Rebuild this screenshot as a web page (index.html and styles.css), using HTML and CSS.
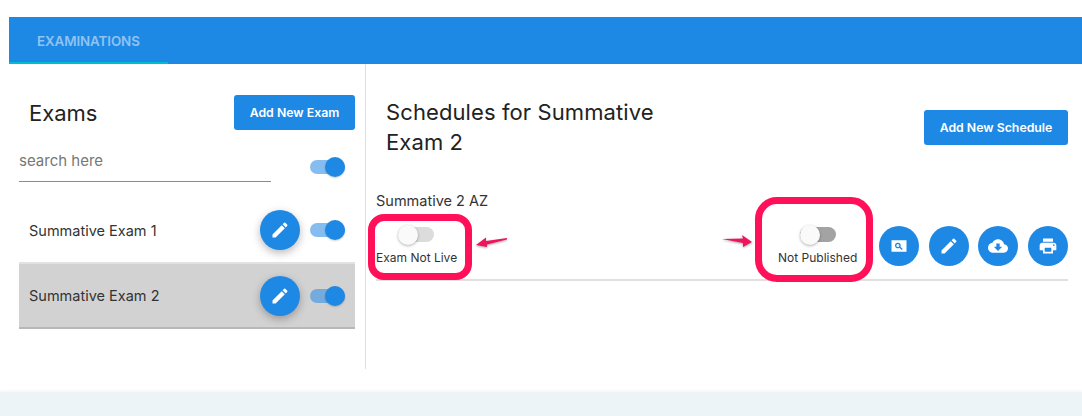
FILE: index.html
```html
<!DOCTYPE html>
<html lang="en">
<head>
<meta charset="utf-8">
<title>Examinations</title>
<link rel="stylesheet" href="styles.css">
</head>
<body>
<div class="card">
  <nav class="tabs"><div class="tab">EXAMINATIONS</div></nav>
  <div class="panels">
    <aside class="side">
      <div class="side-head">
        <h2 class="side-title">Exams</h2>
        <button class="btn btn-exam">Add New Exam</button>
      </div>
      <div class="search-row">
        <div class="search">search here</div>
        <span class="sw sw-on"><i class="knob"></i></span>
      </div>
      <div class="exam">
        <span class="exam-name">Summative Exam 1</span>
        <span class="fab fab-shadow"><svg viewBox="0 0 24 24"><path d="M3 17.25V21h3.75L17.81 9.94l-3.75-3.75L3 17.25zM20.71 7.04a1 1 0 0 0 0-1.41l-2.34-2.34a1 1 0 0 0-1.41 0l-1.83 1.83 3.75 3.75 1.83-1.83z"/></svg></span>
        <span class="sw sw-on"><i class="knob"></i></span>
      </div>
      <div class="exam exam-active">
        <span class="exam-name">Summative Exam 2</span>
        <span class="fab fab-shadow"><svg viewBox="0 0 24 24"><path d="M3 17.25V21h3.75L17.81 9.94l-3.75-3.75L3 17.25zM20.71 7.04a1 1 0 0 0 0-1.41l-2.34-2.34a1 1 0 0 0-1.41 0l-1.83 1.83 3.75 3.75 1.83-1.83z"/></svg></span>
        <span class="sw sw-on"><i class="knob"></i></span>
      </div>
    </aside>
    <main class="content">
      <div class="content-head">
        <h2 class="content-title">Schedules for Summative Exam 2</h2>
        <button class="btn btn-schedule">Add New Schedule</button>
      </div>
      <div class="schedule">
        <div class="schedule-name">Summative 2 AZ</div>
        <div class="schedule-row">
          <div class="status status-live">
            <span class="sw sw-off"><i class="knob knob-off"></i></span>
            <span class="status-label">Exam Not Live</span>
          </div>
          <div class="status status-pub">
            <span class="sw sw-off sw-dark"><i class="knob knob-off"></i></span>
            <span class="status-label">Not Published</span>
          </div>
          <div class="actions">
            <span class="fab"><svg viewBox="0 0 24 24"><path fill-rule="evenodd" d="M3 5h18v14H3zM10.6 8a3.4 3.4 0 1 0 1.9 6.2l2.7 2.7 1.2-1.2-2.7-2.7A3.4 3.4 0 0 0 10.600 8zm0 1.600a1.800 1.800 0 1 1 0 3.600 1.800 1.800 0 0 1 0-3.600z"/></svg></span>
            <span class="fab"><svg viewBox="0 0 24 24"><path d="M3 17.25V21h3.75L17.81 9.94l-3.75-3.75L3 17.25zM20.71 7.04a1 1 0 0 0 0-1.41l-2.34-2.34a1 1 0 0 0-1.41 0l-1.83 1.83 3.75 3.75 1.83-1.83z"/></svg></span>
            <span class="fab"><svg viewBox="0 0 24 24"><path d="M19.35 10.04C18.67 6.59 15.64 4 12 4 9.11 4 6.6 5.64 5.35 8.04 2.34 8.36 0 10.91 0 14c0 3.31 2.69 6 6 6h13c2.76 0 5-2.24 5-5 0-2.64-2.05-4.78-4.65-4.96zM17 13l-5 5-5-5h3V9h4v4h3z"/></svg></span>
            <span class="fab"><svg viewBox="0 0 24 24"><path d="M19 8H5c-1.66 0-3 1.34-3 3v6h4v4h12v-4h4v-6c0-1.66-1.34-3-3-3zm-3 11H8v-5h8v5zm3-7c-.55 0-1-.45-1-1s.45-1 1-1 1 .45 1 1-.45 1-1 1zm-1-9H6v4h12V3z"/></svg></span>
          </div>
        </div>
      </div>
    </main>
  </div>
  <div class="mark mark-live"></div>
  <div class="mark mark-pub"></div>
  <svg class="arrow arrow-live" viewBox="0 0 33 12"><path d="M1 9 L11 1.500 L11 5 L32 2 L32 3.500 L12 8.500 L12 11 Z"/></svg>
  <svg class="arrow arrow-pub" viewBox="0 0 31 14"><path d="M0 5 L21 4.500 L20 1 L30 8 L21 13 L21 9 Z"/></svg>
</div>
<footer class="foot"></footer>
</body>
</html>
```

FILE: styles.css
```css
* { box-sizing: border-box; }
html, body { margin: 0; height: 416px; overflow: hidden; }
body {
  background: #fff;
  font-family: "Inter", "Liberation Sans", sans-serif;
  color: #222;
  display: flex;
  flex-direction: column;
}
.card { position: relative; height: 392px; padding: 17px 0 0 9px; }
.tabs { height: 47px; background: #1e88e5; }
.tab {
  width: 159px;
  height: 47px;
  border-bottom: 2px solid #00bcd4;
  padding: 16px 0 0 28px;
  font-size: 13.4px;
  font-weight: 600;
  line-height: 16px;
  color: #8fc3f2;
  letter-spacing: -.1px;
}
.panels { display: flex; height: 305px; }
.side { flex: none; width: 357px; padding: 31px 10px 0 10px; border-right: 1px solid #e0e0e0; }
.side-head { display: flex; justify-content: space-between; align-items: center; height: 35px; padding-left: 10px; }
.side-title { margin: 0; font-size: 22px; font-weight: 400; color: #222; }
.btn {
  border: 0;
  border-radius: 3px;
  background: #1e88e5;
  color: #fff;
  font-family: inherit;
  font-size: 12.3px;
  font-weight: 600;
  height: 35px;
  padding: 0;
}
.btn-exam { width: 121px; }
.btn-schedule { width: 144px; margin-top: 15px; }
.search-row { display: flex; justify-content: space-between; align-items: flex-start; height: 68px; padding-right: 10px; padding-top: 14px; }
.search {
  width: 252px;
  height: 38px;
  padding-top: 8px;
  border-bottom: 1px solid #8c8c8c;
  font-size: 15px;
  line-height: 17px;
  color: #777;
}
.search-row .sw { margin-top: 16px; }
.sw { position: relative; display: block; width: 35px; height: 14px; border-radius: 8px; flex: none; }
.sw-on { background: #86bdf1; }
.exam-active .sw-on { background: #75abdc; }
.sw-off { background: #dcdcdc; width: 36px; height: 15px; }
.sw-dark { background: #a3a3a3; }
.knob { position: absolute; top: -3px; right: 0; width: 20px; height: 20px; border-radius: 50%; background: #1e88e5; box-shadow: 0 1px 2px rgba(0,0,0,.2); }
.knob-off { left: 0; right: auto; top: -2px; width: 20px; height: 20px; background: #fafafa; box-shadow: 0 1px 3px rgba(0,0,0,.3); }
.exam { display: flex; align-items: center; height: 64px; padding: 0 10px; }
.exam-active { height: 67px; background: #d2d2d2; border-top: 2px solid #e2e2e2; border-bottom: 2px solid #b8b8b8; }
.exam-name { flex: 1; font-size: 14.5px; color: #333; }
.fab {
  display: flex;
  align-items: center;
  justify-content: center;
  width: 40px;
  height: 40px;
  border-radius: 50%;
  background: #1e88e5;
  flex: none;
}
.fab svg { width: 20px; height: 20px; fill: #fff; }
.fab-shadow { box-shadow: 0 3px 8px rgba(0,0,0,.28); margin-right: 10px; }
.content { flex: 1; min-width: 0; padding: 31px 14px 0 10px; }
.content-head { display: flex; justify-content: space-between; align-items: flex-start; padding-left: 10px; height: 97px; }
.content-title { margin: 0; width: 290px; font-size: 22px; line-height: 29.5px; font-weight: 400; padding-top: 3px; color: #222; letter-spacing: .1px; }
.schedule { height: 89px; border-bottom: 2px solid #e0e0e0; }
.schedule-name { font-size: 14.5px; line-height: 17px; color: #333; }
.schedule-row { display: flex; align-items: flex-start; }
.status { display: flex; flex-direction: column; }
.status-live { width: 402px; padding-top: 18px; }
.status-live .sw { margin-left: 22px; }
.status-pub { width: 101px; padding-top: 18px; }
.status-pub .sw { margin-left: 22px; }
.status-label { margin-top: 8px; font-size: 12px; line-height: 15px; color: #333; white-space: nowrap; }
.actions { display: flex; gap: 9.67px; margin-top: 17px; }
.mark { position: absolute; border: 7px solid #ff1059; border-radius: 16px; }
.mark-live { left: 368px; top: 214px; width: 104px; height: 66px; }
.mark-pub { left: 755px; top: 197px; width: 118px; height: 85px; border-radius: 22px; }
.arrow { position: absolute; fill: #f0145f; filter: drop-shadow(0 1px 1px rgba(0,0,0,.35)); }
.arrow-live { left: 475px; top: 236px; width: 33px; height: 12px; }
.arrow-pub { left: 722px; top: 234px; width: 31px; height: 14px; }
.foot { height: 24px; background: #edf4f7; box-shadow: 0 -1px 3px rgba(0,0,0,.05); }
```
